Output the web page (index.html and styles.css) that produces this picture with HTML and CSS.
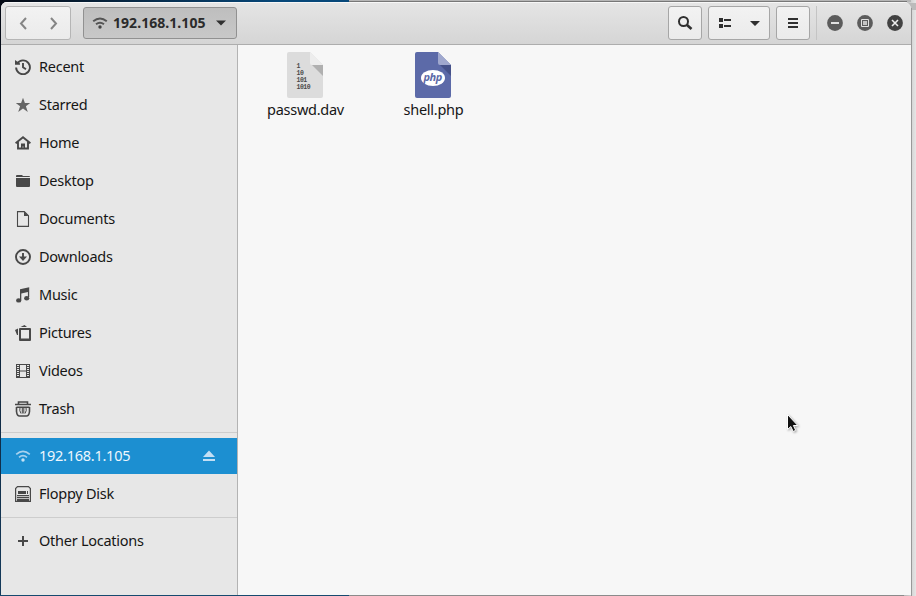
FILE: index.html
```
<!DOCTYPE html>
<html lang="en">
<head>
<meta charset="utf-8">
<title>Files</title>
<link rel="stylesheet" href="styles.css">
</head>
<body>
<div class="desktop">
<div class="window">
  <header class="headerbar">
    <div class="nav button">
      <svg width="64" height="32" viewBox="0 0 64 32" fill="none" stroke="#858585" stroke-width="2"><path d="M20 11l-5 5.500 5 5.500M45 11l5 5.500-5 5.500"/></svg>
    </div>
    <div class="path button">
      <svg class="wifi" width="16" height="16" viewBox="0 0 16 16" fill="none" stroke="#555" stroke-width="1.900"><path d="M1.200 6.300Q8 .6 14.800 6.300M4 9.300Q8 6 12 9.300"/><circle cx="8" cy="12" r="1.700" fill="#444" stroke="none"/></svg>
      <span class="path-label">192.168.1.105</span>
      <svg class="caret" width="10" height="6" viewBox="0 0 10 6" fill="#303030"><path d="M0 .5h10L5 5.500z"/></svg>
    </div>
    <div class="spacer"></div>
    <div class="button search"><svg width="16" height="16" viewBox="0 0 16 16" fill="none" stroke="#303030" stroke-width="2"><circle cx="6.500" cy="6.500" r="4.500"/><path stroke-width="2.600" d="M10 10l4.500 4"/></svg></div>
    <div class="button view"><svg width="60" height="32" viewBox="0 0 60 32" fill="#303030"><path d="M10 11h4v4h-4zM10 17h4v4h-4zM15 12h7v2h-7zM15 18h7v2h-7zM41 14h10l-5 5z"/></svg></div>
    <div class="button menu"><svg width="12" height="12" viewBox="0 0 12 12" fill="#303030"><path d="M1 1h10v2H1zM1 5h10v2H1zM1 9h10v2H1z"/></svg></div>
    <div class="divider"></div>
    <div class="controls">
      <svg width="16" height="16" viewBox="0 0 16 16"><circle cx="8" cy="8" r="7.900" fill="#5c5c5c"/><path fill="#e1e1e1" d="M4 7h8v2H4z"/></svg>
      <svg width="16" height="16" viewBox="0 0 16 16"><circle cx="8" cy="8" r="7.900" fill="#5c5c5c"/><path fill="none" stroke="#e1e1e1" d="M4.500 4.500h7v7h-7z"/><path fill="#c4c4c4" d="M6 6h4v4H6z"/></svg>
      <svg width="16" height="16" viewBox="0 0 16 16"><circle cx="8" cy="8" r="7.900" fill="#424242"/><path fill="none" stroke="#eee" stroke-width="1.600" d="M5 5l6 6M11 5l-6 6"/></svg>
    </div>
  </header>
  <div class="content">
    <nav class="sidebar">
      <div class="row"><svg class="icon" viewBox="0 0 16 16" fill="none" stroke="#484848" stroke-width="1.900"><path d="M2.300 4.400A6.900 6.900 0 1 1 1.100 8.500M8 4v4.300l3 2"/><path fill="#484848" stroke="none" d="M0 1l1.800 1.200L5 4.500v1.300H0z"/></svg><span>Recent</span></div>
      <div class="row"><svg class="icon" viewBox="0 0 16 16" fill="#646464"><path d="M8 .8l1.900 5.100h5.300l-4.300 3.300 1.900 5.800L8 11.600 3.200 15l1.900-5.800L.8 5.900h5.300z"/></svg><span>Starred</span></div>
      <div class="row"><svg class="icon" viewBox="0 0 16 16" fill="none" stroke="#484848" stroke-width="1.900"><path d="M.6 8.200L8 2.300l7.400 5.900M3 7v6.500h10V7"/><path fill="#484848" stroke="none" d="M6 8.500h4V14H8.500v-2.500h-1V14H6z"/></svg><span>Home</span></div>
      <div class="row"><svg class="icon" viewBox="0 0 16 16" fill="#484848"><path d="M1 4V3q0-1 1-1h5l1 1h6q1 0 1 1zM1 5h14v8q0 1-1 1H2q-1 0-1-1z"/></svg><span>Desktop</span></div>
      <div class="row"><svg class="icon" viewBox="0 0 16 16" fill="none" stroke="#484848" stroke-width="1.100"><path d="M2.500.6h6.800l4.200 4.200v10.600h-11z"/><path fill="#484848" stroke="none" d="M9 .5l4.500 4.500H9z"/></svg><span>Documents</span></div>
      <div class="row"><svg class="icon" viewBox="0 0 16 16" fill="none" stroke="#484848" stroke-width="1.900"><circle cx="8" cy="8" r="7"/><path d="M8 4v5"/><path fill="#484848" stroke="none" d="M4 7.500h8L8 12z"/></svg><span>Downloads</span></div>
      <div class="row"><svg class="icon" viewBox="0 0 16 16" fill="#484848"><path d="M5 2.300L14.200.2V10h-1.300V5L6.300 6.500V13H5z"/><ellipse cx="3.700" cy="13.400" rx="2.600" ry="2.200"/><ellipse cx="11.700" cy="11.200" rx="2.600" ry="2.200"/></svg><span>Music</span></div>
      <div class="row"><svg class="icon" viewBox="0 0 16 16" fill="#484848"><path fill-rule="evenodd" d="M5 3h10q1 0 1 1v11q0 1-1 1H5q-1 0-1-1V4q0-1 1-1zM6 5v8.500h8V5zM0 5l3-1.500V10H2zM5.500 2l4-2L12 2z"/></svg><span>Pictures</span></div>
      <div class="row"><svg class="icon" viewBox="0 0 16 16" fill="none" stroke="#484848"><path d="M1.500 1v14M14.500 1v14M1 1.500h14M1 14.500h14M4.500 1v14M11.500 1v14M4.500 8h7"/><path stroke-width="2" stroke-dasharray="1 1" d="M3 1v14M13 1v14"/></svg><span>Videos</span></div>
      <div class="row"><svg class="icon" viewBox="0 0 16 16" fill="none" stroke="#484848" stroke-width="1.600"><path d="M3.500 3V1h9v2M0 3.500h16M1.500 6.300h13M1.500 6v4.500q.5 4.500 3 4.500h7q2.500 0 3-4.500V6"/><path stroke-width="1" d="M5 6.500q-1 3 1 6M7.300 6.500v6M8.800 6.500v6M11 6.500q1 3-1 6"/></svg><span>Trash</span></div>
      <hr>
      <div class="row selected"><svg class="icon" viewBox="0 0 16 16" fill="none" stroke="#a9d2ee" stroke-width="1.700"><path d="M1.200 6.300Q8 .6 14.800 6.300M4 9.300Q8 6 12 9.300"/><circle cx="8" cy="12" r="1.700" fill="#c5e2f5" stroke="none"/></svg><span>192.168.1.105</span><svg class="eject" width="12" height="12" viewBox="0 0 12 12" fill="#c3dff4"><path d="M6 .5L12 7H0zM0 9h12v2H0z"/></svg></div>
      <div class="row"><svg class="icon" viewBox="0 0 16 16" fill="none" stroke="#484848"><path stroke-width="1.200" d="M2.500.6h11l1.900 1.900v12.900H.6V2.500z"/><path fill="#484848" stroke="none" d="M3 5h8v3H3zM12 5h1v3h-1zM2 9h12v1.300H2zM2 11h12v1.300H2zM2 13h12v2H2z"/></svg><span>Floppy Disk</span></div>
      <hr>
      <div class="row"><svg class="icon" viewBox="0 0 16 16" fill="#484848"><path d="M7 3h2v4h4v2H9v4H7V9H3V7h4z"/></svg><span>Other Locations</span></div>
    </nav>
    <main class="files">
      <div class="file">
        <svg width="36" height="46" viewBox="0 0 36 46"><path fill="#dcdcdc" d="M2 0h21l13 13v31q0 2-2 2H2q-2 0-2-2V2q0-2 2-2z"/><path fill="#b0b0b0" d="M25 13h11v11z"/><path fill="#ededed" d="M23 0l13 13H25q-2 0-2-2z"/><g class="bits"><text x="9.500" y="16">1</text><text x="9.500" y="23">10</text><text x="9.500" y="30">101</text><text x="9.500" y="37">1010</text></g></svg>
        <span>passwd.dav</span>
      </div>
      <div class="file">
        <svg width="36" height="46" viewBox="0 0 36 46"><path fill="#5c6aa8" d="M2 0h21l13 13v31q0 2-2 2H2q-2 0-2-2V2q0-2 2-2z"/><path fill="#46528a" d="M25 13h11v11z"/><path fill="#a0a8ce" d="M23 0l13 13H25q-2 0-2-2z"/><ellipse cx="18" cy="26" rx="12" ry="8" fill="#fff"/><text class="php" x="17.700" y="28.500" text-anchor="middle">php</text></svg>
        <span>shell.php</span>
      </div>
    </main>
  </div>
</div>
<svg class="pointer" width="14" height="20" viewBox="0 0 14 20"><path fill="#111" stroke="#fff" d="M1.500 1.500v15l3.300-3 2.400 5 2.500-1.200-2.300-4.800h4.400z"/></svg>
</div>
</body>
</html>
```
FILE: styles.css
```
* { box-sizing: border-box; }
body { margin: 0; font-family: "Noto Sans", sans-serif; font-size: 14.5px; letter-spacing: -.26px; color: #161616; }
svg { display: block; flex: none; }
.desktop {
  position: relative;
  width: 916px;
  height: 596px;
  padding: 2px 4px 1px 1px;
  overflow: hidden;
  background:
    linear-gradient(#999, #999) 911px 8px / 1px 588px no-repeat,
    linear-gradient(#777, #777) 349px 1px / 558px 1px no-repeat,
    linear-gradient(#b6b6b6, #b6b6b6) 349px 0 / 562px 2px no-repeat,
    linear-gradient(#bbb, #bbb) 904px 3px / 12px 7px no-repeat,
    linear-gradient(90deg, #b5b5b5, #e6e6e6) 904px 0 / 12px 596px no-repeat,
    linear-gradient(90deg, #050a14, #07487a 80%) 0 0 / 349px 2px no-repeat,
    linear-gradient(90deg, #164a6f 349px, #8b8b8b 349px) 0 595px / 912px 1px no-repeat,
    linear-gradient(#050914, #143a5b);
}
.window { width: 910px; height: 593px; display: flex; flex-direction: column; border-radius: 6px 7px 0 0; overflow: hidden; background: #f7f7f7; }
.headerbar {
  height: 43px;
  flex: none;
  display: flex;
  align-items: center;
  padding: 0 8px 1px 4px;
  border-bottom: 1px solid #adadad;
  background: linear-gradient(#e5e5e5, #d5d5d5);
  box-shadow: inset 0 1px #f7f7f7;
}
.button { height: 34px; border: 1px solid #a6a6a6; border-radius: 3px; background: linear-gradient(#f2f2f2, #ebebeb); display: flex; align-items: center; justify-content: center; }
.nav { width: 66px; border-color: #b5b5b5; }
.path { width: 154px; height: 32px; margin-left: 12px; padding: 0 12px 0 8px; justify-content: flex-start; border-color: #919191; background: linear-gradient(#bebebe, #c8c8c8); }
.path-label { margin-left: 5px; width: 94px; font-weight: 700; font-size: 14px; letter-spacing: .05px; white-space: nowrap; color: #2b2b2b; }
.caret { margin-left: 10px; }
.spacer { flex: 1; }
.search { width: 34px; margin-right: 6px; }
.view { width: 62px; margin-right: 6px; }
.menu { width: 34px; }
.divider { width: 1px; height: 34px; margin: 0 10px 0 6px; background: #c4c4c4; }
.controls { display: flex; gap: 14px; }
.content { flex: 1; display: flex; min-height: 0; }
.sidebar { width: 237px; padding-top: 3px; background: #e7e7e7; border-right: 1px solid #b3b3b3; }
.row { height: 38px; display: flex; align-items: center; padding: 0 22px 0 14px; border: solid transparent; border-width: 1px 0; background-clip: padding-box; }
.row span { margin-left: 8px; padding-bottom: 2px; white-space: nowrap; }
.icon { width: 16px; height: 16px; }
.selected { background-color: #1c8fd1; color: #eef7fd; }
.eject { margin-left: auto; }
hr { height: 1px; margin: 4px 0; border: 0; background: #cdcdcd; }
.files { flex: 1; display: flex; padding: 7px 0 0 3px; }
.file { width: 128px; display: flex; flex-direction: column; align-items: center; }
.file span { line-height: 20px; margin-top: 1px; padding-left: 1px; }
.bits { font: 700 6.500px "Liberation Mono", monospace; fill: #4a4a4a; letter-spacing: -.5px; }
.php { font: italic 700 11px "Open Sans", sans-serif; letter-spacing: -.5px; fill: #5c6aa8; }
.pointer { position: absolute; left: 786px; top: 413px; filter: drop-shadow(1px 1px 1px #0005); }
```
